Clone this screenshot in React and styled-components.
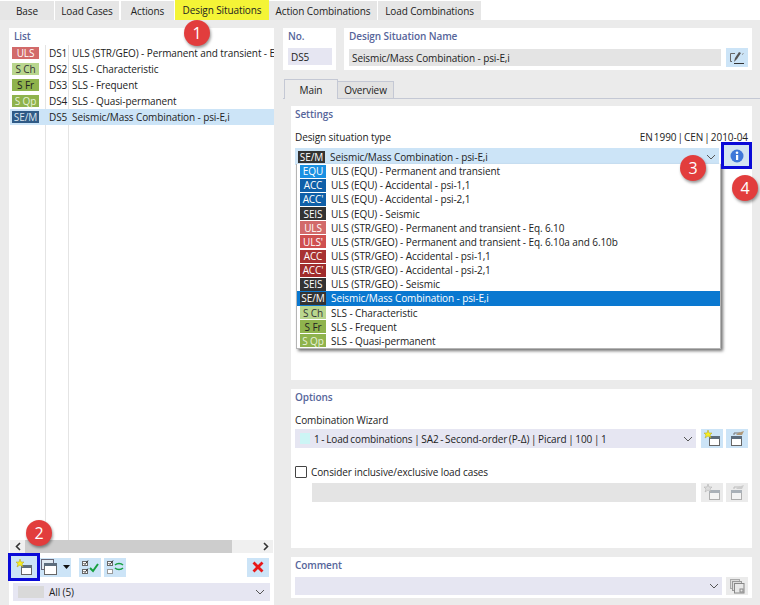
import React from "react";
import styled, { createGlobalStyle } from "styled-components";

const Global = createGlobalStyle`
  html, body { margin: 0; padding: 0; background: #fff; }
  body { font-family: "Open Sans", "Noto Sans", sans-serif; font-size: 10px; letter-spacing: -.1px; color: #222; }
`;
const Page = styled.div`position: relative; width: 760px; height: 605px; overflow: hidden; background: #ebebeb;`;
const TabBar = styled.div`display: flex; height: 20px; background: #fff;`;
const TopTab = styled.div`
  width: ${p => p.$w}px; margin-right: ${p => p.$gap || 0}px; height: ${p => p.$active ? 20 : 19}px; margin-top: ${p => p.$active ? 0 : 1}px;
  background: ${p => p.$active ? "#f4f436" : "#e6e6e6"}; display: flex; align-items: center; justify-content: center; white-space: nowrap;
`;
const Body = styled.div`display: flex; height: 585px; padding-top: 8px; box-sizing: border-box;`;
const LeftPanel = styled.div`width: 265px; margin: 0 9px; background: #fff; display: flex; flex-direction: column; height: 577px; padding-bottom: 4px; box-sizing: border-box; flex: none;`;
const SectionTitle = styled.div`color: #56659a; font-weight: 600; line-height: 14px; height: 14px;`;
const ListTitle = styled(SectionTitle)`padding: 1px 0 2px 5px;`;
const ListBody = styled.div`
  flex: 1; padding-left: 1px;
  background: linear-gradient(#e4e4e4,#e4e4e4) 36px 0/1px 100% no-repeat, linear-gradient(#e4e4e4,#e4e4e4) 59px 0/1px 100% no-repeat;
`;
const ListRow = styled.div`display: flex; align-items: center; height: 16px; white-space: nowrap; overflow: hidden; background: ${p => p.$sel ? "#cce4f7" : "transparent"};`;
const Tag = styled.span`
  flex: none; display: flex; align-items: center; justify-content: center; box-sizing: border-box;
  width: ${p => p.$w || 27}px; height: ${p => p.$h || 12}px; background: ${p => p.$bg}; color: ${p => p.$fg || "#fff"};
  font-size: 10px; line-height: 1; white-space: nowrap;
`;
const ListTag = styled(Tag)`margin-left: 2px;`;
const DsNo = styled.span`margin-left: 10px; width: 23px; flex: none;`;
const HScroll = styled.div`display: flex; align-items: center; height: 13px; margin: 0 1px; background: #f0f0f0; justify-content: space-between;`;
const Thumb = styled.div`width: 207px; height: 13px; background: #cdcdcd;`;
const ScrollEnd = styled.div`width: 15px; display: flex; justify-content: center;`;
const ListTools = styled.div`display: flex; align-items: center; height: 20px; margin-top: 4px; padding-left: 2px;`;
const ToolBtn = styled.div`
  position: relative; width: ${p => p.$w || 22}px; height: ${p => p.$h || 19}px; flex: none; margin: 0 ${p => p.$mr || 0}px 0 ${p => p.$ml || 0}px;
  background: ${p => p.$off ? "#ebebeb" : "#cce4f7"}; display: flex; align-items: center; justify-content: center;
  outline: ${p => p.$ring ? "3px solid #0a0ad8" : "none"};
`;
const FilterBar = styled.div`display: flex; align-items: center; height: 18px; margin: 6px 4px 0 4px; background: #e6e6f2; padding: 0 5px; gap: 5px;`;
const Swatch = styled.span`flex: none; width: ${p => p.$w}px; height: ${p => p.$h}px; background: ${p => p.$c};`;
const Grow = styled.span`flex: 1; white-space: nowrap;`;
const TightText = styled(Grow)`word-spacing: -.8px;`;
const NormRef = styled.span`word-spacing: -1.500px; letter-spacing: -.05px;`;
const RightCol = styled.div`width: 469px; flex: none; display: flex; flex-direction: column;`;
const HeadRow = styled.div`display: flex; gap: 8px; height: 42px;`;
const Card = styled.div`background: #fff; box-sizing: border-box; padding: 1px 4px 0 5px; width: ${p => p.$w}px;`;
const FieldRow = styled.div`display: flex; align-items: center; margin-top: ${p => p.$mt ?? 5}px; gap: 5px;`;
const Field = styled.div`
  flex: 1; height: ${p => p.$h || 17}px; background: ${p => p.$bg || "#e4e4e4"}; display: flex; align-items: center; padding-left: ${p => p.$pl || 3}px; white-space: nowrap; box-sizing: border-box;
`;
const SubTabs = styled.div`display: flex; align-items: flex-end; height: 20px; margin-top: 9px; padding-left: 1px; margin-right: -8px; box-shadow: inset 0 -1px #c4c8d4;`;
const SubTab = styled.div`
  width: ${p => p.$w}px; height: ${p => p.$active ? 20 : 18}px; box-sizing: border-box; display: flex; align-items: center; justify-content: center;
  background: ${p => p.$active ? "#ebebeb" : "#e2e2e2"}; border: 1px solid #c4c8d4; border-bottom: ${p => p.$active ? "none" : "1px solid #c4c8d4"}; border-left-width: ${p => p.$active ? 1 : 0}px;
`;
const Panel = styled.div`margin: ${p => p.$mt}px 0 0 8px; width: 461px; height: ${p => p.$h}px; background: #fff; padding: 1px 4px 0 4px; box-sizing: border-box; flex: none;`;
const LabelRow = styled.div`display: flex; justify-content: space-between; margin-top: ${p => p.$mt}px; line-height: 14px; white-space: nowrap;`;
const SelectRow = styled.div`display: flex; align-items: center; margin-top: ${p => p.$mt ?? 3}px; gap: 3px;`;
const Select = styled.div`
  flex: 1; min-width: 0; height: ${p => p.$h || 19}px; background: ${p => p.$bg || "#e6e6f2"}; display: flex; align-items: center; padding: 0 3px 0 ${p => p.$pl ?? 5}px; gap: ${p => p.$gap ?? 4}px; box-sizing: border-box; white-space: nowrap;
`;
const InfoBtn = styled.div`
  position: absolute; left: 721px; top: 142px; width: 25px; height: 21px; border: 3px solid #0a0ad8; background: #d2e4f2; display: flex; align-items: center; justify-content: center;
`;
const Menu = styled.div`
  position: absolute; left: 296px; top: 164px; width: 425px; height: 185px; background: #fff; box-sizing: border-box;
  border: 1px solid #b5b5b5; border-top: none; box-shadow: 2px 2px 3px rgba(0,0,0,.55);
`;
const MenuRow = styled.div`display: flex; align-items: center; height: 14.16px; padding-left: 3px; gap: 5px; white-space: nowrap; background: ${p => p.$sel ? "#0a78d0" : "transparent"}; color: ${p => p.$sel ? "#fff" : "#222"};`;
const Num = styled.div`
  position: absolute; left: ${p => p.$x - 13}px; top: ${p => p.$y - 13}px; width: 26px; height: 26px; border-radius: 50%;
  background: #e23d3d; color: #fff; font-size: 16px; display: flex; align-items: center; justify-content: center; box-shadow: 1px 2px 3px rgba(0,0,0,.4);
`;
const CheckRow = styled.div`display: flex; align-items: center; gap: 4px; margin-top: 17px; height: 14px;`;
const Box = styled.span`width: 10px; height: 10px; border: 1px solid #444; background: #fff; flex: none; border-radius: 1px;`;
const Indented = styled.div`display: flex; gap: 3px; margin: 4px 0 0 17px; align-items: center;`;
const CaretGap = styled.span`margin-left: 3px; display: flex;`;

const Chevron = ({ c = "#555" }) => (
  <svg width="10" height="6" viewBox="0 0 10 6"><path d="M1 1l4 4 4-4" fill="none" stroke={c} strokeWidth="1" /></svg>
);
const Win = ({ dim, x = 6, y = 5 }) => (
  <g opacity={dim ? 0.45 : 1}>
    <rect x={x + .5} y={y + .5} width="10" height="9" fill="#fff" stroke="#666" />
    <rect x={x} y={y} width="11" height="3" fill="#5c6c7c" />
  </g>
);
const NewIcon = ({ dim }) => (
  <svg width="18" height="17" viewBox="0 0 18 17">
    <Win dim={dim} x={6} y={6} />
    <path d="M5 0l1 3 3 0-2 2 1 3-3-2-3 2 1-3-2-2 3 0z" fill={dim ? "#ddd" : "#f6ee20"} stroke={dim ? "#aaa" : "#b0a020"} strokeWidth=".5" />
  </svg>
);
const CopyIcon = ({ dim }) => (
  <svg width="18" height="17" viewBox="0 0 18 17">
    <Win dim={dim} x={3} y={6} />
    <path d="M6 5V3h6" fill="none" stroke={dim ? "#bbb" : "#777"} />
    <path d="M8 5l2-2 6-2-2 4z" fill={dim ? "#ccc" : "#b09878"} />
  </svg>
);
const StackIcon = () => (
  <svg width="19" height="17" viewBox="0 0 19 17">
    <rect x=".5" y=".5" width="12" height="10" fill="#dfe8f0" stroke="#667" />
    <rect x="3.500" y="4.500" width="12" height="11" fill="#fff" stroke="#666" />
    <rect x="3" y="4" width="13" height="3" fill="#5c6c7c" />
  </svg>
);
const CheckAll = () => (
  <svg width="18" height="16" viewBox="0 0 18 16">
    <rect x="1.500" y="2.500" width="5" height="4" fill="#fff" stroke="#666" /><path d="M2.500 4l1.500 1.500L7 1.500" fill="none" stroke="#333" />
    <rect x="1.500" y="10.500" width="5" height="4" fill="#fff" stroke="#666" /><path d="M2.500 12l1.500 1.500L7 9.500" fill="none" stroke="#333" />
    <path d="M9 9l3 3 5-7" fill="none" stroke="#18a040" strokeWidth="2" />
  </svg>
);
const CheckSwap = () => (
  <svg width="18" height="16" viewBox="0 0 18 16">
    <rect x="1.500" y="2.500" width="5" height="4" fill="#fff" stroke="#666" /><path d="M2.500 4l1.500 1.500L7 1.500" fill="none" stroke="#333" />
    <rect x="1.500" y="10.500" width="5" height="4" fill="#fff" stroke="#999" />
    <path d="M9 6c2-2 6-2 8 0M17 9c-2 2-6 2-8 0" fill="none" stroke="#18a040" strokeWidth="1.500" />
  </svg>
);
const EditIcon = () => (
  <svg width="16" height="14" viewBox="0 0 16 14">
    <path d="M6 2.500H1.500v8H3" fill="none" stroke="#666" /><path d="M5 12.500h10" stroke="#333" />
    <path d="M5 11l1-4 4-6 2 1-4 6z" fill="#555" /><path d="M13 3.500l1.500-1" stroke="#888" />
  </svg>
);
const Redx = () => (
  <svg width="12" height="12" viewBox="0 0 12 12"><path d="M1.500 1.500l9 9M10.500 1.500l-9 9" stroke="#e81818" strokeWidth="2.800" /></svg>
);
const Info = () => (
  <svg width="14" height="14" viewBox="0 0 14 14">
    <circle cx="7" cy="7" r="6.500" fill="#3f78d8" />
    <rect x="6" y="6" width="2.200" height="5" fill="#fff" /><circle cx="7" cy="3.800" r="1.300" fill="#fff" />
  </svg>
);
const Duplicate = () => (
  <svg width="15" height="15" viewBox="0 0 15 15">
    <rect x=".5" y=".5" width="9" height="9" fill="#ddd" stroke="#aaa" /><rect x="2.500" y="2.500" width="9" height="9" fill="#ddd" stroke="#999" />
    <rect x="4.500" y="4.500" width="9.500" height="9.500" fill="#e8e8e8" stroke="#888" /><rect x="10" y="10" width="3" height="3" fill="none" stroke="#888" />
  </svg>
);
const Arrow = ({ left }) => (
  <svg width="6" height="9" viewBox="0 0 6 9"><path d={left ? "M5 1L1.500 4.500 5 8" : "M1 1l3.500 3.500L1 8"} fill="none" stroke="#333" strokeWidth="1.600" /></svg>
);
const Caret = () => <svg width="7" height="4" viewBox="0 0 7 4"><path d="M0 0h7L3.500 4z" fill="#111" /></svg>;

const tabs = [
  ["Base", 54, 1], ["Load Cases", 64, 2], ["Actions", 53, 1], ["Design Situations", 94, 0, true],
  ["Action Combinations", 108, 1], ["Load Combinations", 103, 0],
];
const list = [
  ["ULS", "#d26a6a", "#fff", "DS1", "ULS (STR/GEO) - Permanent and transient - E"],
  ["S Ch", "#b9d68e", "#333", "DS2", "SLS - Characteristic"],
  ["S Fr", "#8fb34d", "#222", "DS3", "SLS - Frequent"],
  ["S Qp", "#8fb34d", "#e8f2d8", "DS4", "SLS - Quasi-permanent"],
  ["SE/M", "#2f5a86", "#dbe6f0", "DS5", "Seismic/Mass Combination - psi-E,i", true],
];
const menu = [
  ["EQU", "#1a90e2", "ULS (EQU) - Permanent and transient"],
  ["ACC", "#0f5fa8", "ULS (EQU) - Accidental - psi-1,1"],
  ["ACC'", "#0f5fa8", "ULS (EQU) - Accidental - psi-2,1"],
  ["SEIS", "#333", "ULS (EQU) - Seismic"],
  ["ULS", "#d26a6a", "ULS (STR/GEO) - Permanent and transient - Eq. 6.10"],
  ["ULS'", "#cf5050", "ULS (STR/GEO) - Permanent and transient - Eq. 6.10a and 6.10b"],
  ["ACC", "#a83232", "ULS (STR/GEO) - Accidental - psi-1,1"],
  ["ACC'", "#a02c2c", "ULS (STR/GEO) - Accidental - psi-2,1"],
  ["SEIS", "#333", "ULS (STR/GEO) - Seismic"],
  ["SE/M", "#333", "Seismic/Mass Combination - psi-E,i", true],
  ["S Ch", "#b9d68e", "SLS - Characteristic", false, "#333"],
  ["S Fr", "#8fb34d", "SLS - Frequent", false, "#222"],
  ["S Qp", "#8fb34d", "SLS - Quasi-permanent", false, "#e8f2d8"],
];

export default function App() {
  return (
    <Page>
      <Global />
      <TabBar>
        {tabs.map(([t, w, g, a]) => <TopTab key={t} $w={w} $gap={g} $active={a}>{t}</TopTab>)}
      </TabBar>
      <Body>
        <LeftPanel>
          <ListTitle>List</ListTitle>
          <ListBody>
            {list.map(([tag, bg, fg, no, name, sel]) => (
              <ListRow key={no} $sel={sel}>
                <ListTag $bg={bg} $fg={fg}>{tag}</ListTag>
                <DsNo>{no}</DsNo>
                <span>{name}</span>
              </ListRow>
            ))}
          </ListBody>
          <HScroll>
            <ScrollEnd><Arrow left /></ScrollEnd>
            <Thumb />
            <Grow />
            <ScrollEnd><Arrow /></ScrollEnd>
          </HScroll>
          <ListTools>
            <ToolBtn $ring $w={26} $h={22} $mr={3}><NewIcon /></ToolBtn>
            <ToolBtn $w={31}><StackIcon /><CaretGap><Caret /></CaretGap></ToolBtn>
            <ToolBtn $ml={8}><CheckAll /></ToolBtn>
            <ToolBtn $ml={3}><CheckSwap /></ToolBtn>
            <ToolBtn $ml={121}><Redx /></ToolBtn>
          </ListTools>
          <FilterBar>
            <Swatch $w={26} $h={12} $c="#d9d9d9" />
            <Grow>All (5)</Grow>
            <Chevron />
          </FilterBar>
        </LeftPanel>
        <RightCol>
          <HeadRow>
            <Card $w={53}>
              <SectionTitle>No.</SectionTitle>
              <FieldRow><Field $bg="#e6e6f2" $h={17}>DS5</Field></FieldRow>
            </Card>
            <Card $w={408}>
              <SectionTitle>Design Situation Name</SectionTitle>
              <FieldRow>
                <Field>Seismic/Mass Combination - psi-E,i</Field>
                <ToolBtn><EditIcon /></ToolBtn>
              </FieldRow>
            </Card>
          </HeadRow>
          <SubTabs>
            <SubTab $w={54} $active>Main</SubTab>
            <SubTab $w={56}>Overview</SubTab>
          </SubTabs>
          <Panel $mt={7} $h={274}>
            <SectionTitle>Settings</SectionTitle>
            <LabelRow $mt={9}><span>Design situation type</span><NormRef>EN 1990 | CEN | 2010-04</NormRef></LabelRow>
            <SelectRow $mt={4}>
              <Select $bg="#cce4f7" $h={17} $pl={3} $gap={5}>
                <Tag $bg="#333">SE/M</Tag>
                <Grow>Seismic/Mass Combination - psi-E,i</Grow>
                <Chevron />
              </Select>
              <Swatch $w={26} $h={17} $c="transparent" />
            </SelectRow>
          </Panel>
          <Panel $mt={9} $h={159}>
            <SectionTitle>Options</SectionTitle>
            <LabelRow $mt={9}><span>Combination Wizard</span></LabelRow>
            <SelectRow $mt={2}>
              <Select>
                <Swatch $w={10} $h={11} $c="#ccf5f5" />
                <TightText>1 - Load combinations | SA2 - Second-order (P-Δ) | Picard | 100 | 1</TightText>
                <Chevron />
              </Select>
              <ToolBtn $ml={2}><NewIcon /></ToolBtn>
              <ToolBtn><CopyIcon /></ToolBtn>
            </SelectRow>
            <CheckRow><Box />Consider inclusive/exclusive load cases</CheckRow>
            <Indented>
              <Field $h={19} />
              <ToolBtn $off $ml={2}><NewIcon dim /></ToolBtn>
              <ToolBtn $off><CopyIcon dim /></ToolBtn>
            </Indented>
          </Panel>
          <Panel $mt={9} $h={41}>
            <SectionTitle>Comment</SectionTitle>
            <SelectRow $mt={5}>
              <Select $h={18}><Grow /><Chevron /></Select>
              <ToolBtn $off $ml={1} $h={18}><Duplicate /></ToolBtn>
            </SelectRow>
          </Panel>
        </RightCol>
      </Body>
      <Menu>
        {menu.map(([tag, bg, text, sel, fg], i) => (
          <MenuRow key={i} $sel={sel}>
            <Tag $bg={bg} $fg={fg} $h={13} $w={26}>{tag}</Tag>
            <span>{text}</span>
          </MenuRow>
        ))}
      </Menu>
      <InfoBtn><Info /></InfoBtn>
      <Num $x={197} $y={33}>1</Num>
      <Num $x={39} $y={533}>2</Num>
      <Num $x={693} $y={168}>3</Num>
      <Num $x={745} $y={188}>4</Num>
    </Page>
  );
}
